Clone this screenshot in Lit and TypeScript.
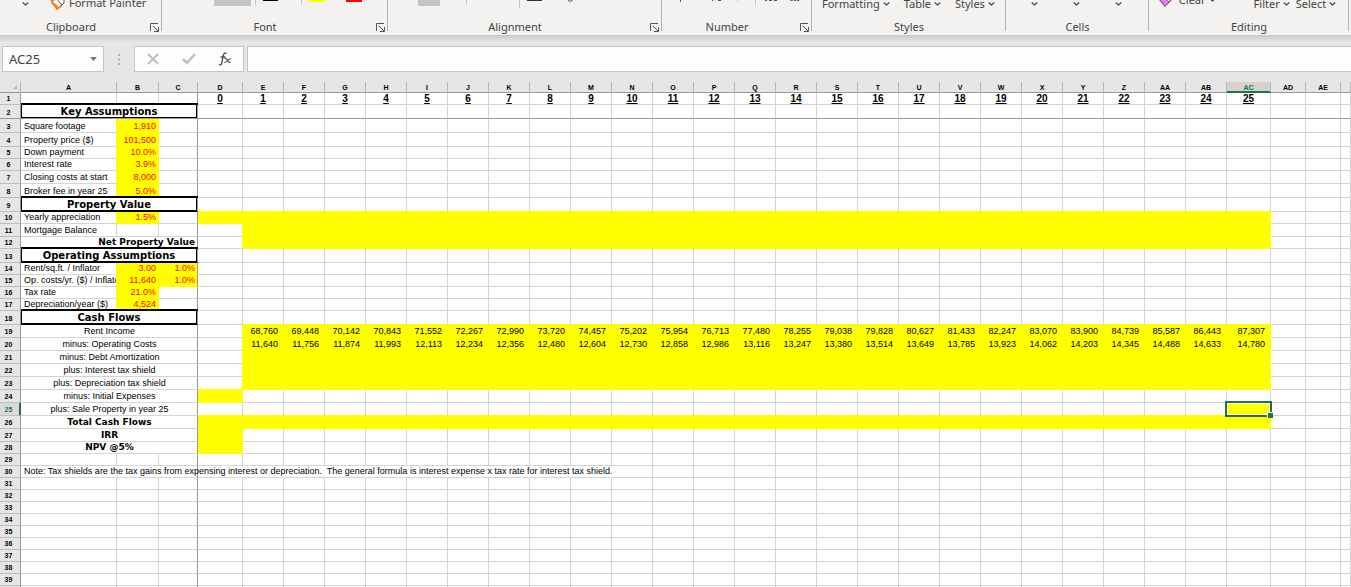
import { LitElement, html, css, svg, nothing } from "lit";
import { customElement } from "lit/decorators.js";
import { classMap } from "lit/directives/class-map.js";

const LETTERS = "ABCDEFGHIJKLMNOPQRSTUVWXYZ".split("");
const COLS = [...LETTERS, "AA", "AB", "AC", "AD", "AE", ""];
const AC = COLS.indexOf("AC");

type Row = { n: number; size: string; label?: string; kind?: string; b?: string; c?: string; fill?: [number, number]; values?: string[] };

const RENT = "68,760 69,448 70,142 70,843 71,552 72,267 72,990 73,720 74,457 75,202 75,954 76,713 77,480 78,255 79,038 79,828 80,627 81,433 82,247 83,070 83,900 84,739 85,587 86,443 87,307".split(" ");
const COSTS = "11,640 11,756 11,874 11,993 12,113 12,234 12,356 12,480 12,604 12,730 12,858 12,986 13,116 13,247 13,380 13,514 13,649 13,785 13,923 14,062 14,203 14,345 14,488 14,633 14,780".split(" ");

const ROWS: Row[] = [
  { n: 1, size: "s", kind: "years" },
  { n: 2, size: "l", kind: "section", label: "Key Assumptions" },
  { n: 3, size: "l", label: "Square footage", b: "1,910" },
  { n: 4, size: "l", label: "Property price ($)", b: "101,500" },
  { n: 5, size: "s", label: "Down payment", b: "10.0%" },
  { n: 6, size: "s", label: "Interest rate", b: "3.9%" },
  { n: 7, size: "m", label: "Closing costs at start", b: "8,000" },
  { n: 8, size: "l", label: "Broker fee in year 25", b: "5.0%" },
  { n: 9, size: "l", kind: "section", label: "Property Value" },
  { n: 10, size: "s", label: "Yearly appreciation", b: "1.5%", fill: [3, AC] },
  { n: 11, size: "m", label: "Mortgage Balance", fill: [4, AC] },
  { n: 12, size: "s", kind: "total right", label: "Net Property Value", fill: [4, AC] },
  { n: 13, size: "l", kind: "section", label: "Operating Assumptions" },
  { n: 14, size: "s", label: "Rent/sq.ft. / Inflator", b: "3.00", c: "1.0%" },
  { n: 15, size: "s", label: "Op. costs/yr. ($) / Inflator", b: "11,640", c: "1.0%" },
  { n: 16, size: "s", label: "Tax rate", b: "21.0%" },
  { n: 17, size: "s", label: "Depreciation/year ($)", b: "4,524" },
  { n: 18, size: "l", kind: "section", label: "Cash Flows" },
  { n: 19, size: "m", kind: "flow", label: "Rent Income", fill: [4, AC], values: RENT },
  { n: 20, size: "m", kind: "flow", label: "minus: Operating Costs", fill: [4, AC], values: COSTS },
  { n: 21, size: "m", kind: "flow", label: "minus: Debt Amortization", fill: [4, AC] },
  { n: 22, size: "m", kind: "flow", label: "plus: Interest tax shield", fill: [4, AC] },
  { n: 23, size: "m", kind: "flow", label: "plus: Depreciation tax shield", fill: [4, AC] },
  { n: 24, size: "m", kind: "flow", label: "minus: Initial Expenses", fill: [3, 3] },
  { n: 25, size: "m", kind: "flow", label: "plus: Sale Property in year 25", fill: [AC, AC] },
  { n: 26, size: "m", kind: "flow total", label: "Total Cash Flows", fill: [3, AC] },
  { n: 27, size: "m", kind: "flow total", label: "IRR", fill: [3, 3] },
  { n: 28, size: "s", kind: "flow total", label: "NPV @5%", fill: [3, 3] },
  { n: 29, size: "s" },
  { n: 30, size: "s", kind: "note", label: "Note: Tax shields are the tax gains from expensing interest or depreciation.\u00a0 The general formula is interest expense x tax rate for interest tax shield." },
  ...Array.from({ length: 10 }, (_, i) => ({ n: 31 + i, size: "s" })),
];

const filled = (row: Row | undefined, c: number): boolean => {
  if (!row) return false;
  if (c === 1) return !!row.b;
  if (c === 2) return !!row.c;
  return !!row.fill && c >= row.fill[0] && c <= row.fill[1];
};

const chevron = html`<svg class="chev" viewBox="0 0 7 4" width="7" height="4" aria-hidden="true"><path d="M.7 .5 3.5 3 6.3 .5" fill="none" stroke="#444" stroke-width="1.2"/></svg>`;

@customElement("excel-ribbon")
export class ExcelRibbon extends LitElement {
  static styles = css`
    :host { display: block; background: #f3f2f1; color: #444; font: 12px/16px "Noto Sans", "Open Sans", sans-serif; }
    .ribbon { display: flex; height: 35px; overflow: hidden; }
    .group { flex: none; box-sizing: border-box; display: grid; grid-template-rows: 19px 16px; position: relative; }
    .group::after { content: ""; position: absolute; right: 0; top: 0; width: 1px; height: 31px; background: #b3b0ad; }
    .clipboard { width: 162px; } .font { width: 226px; } .alignment { width: 274px; } .number { width: 150px; }
    .styles { width: 194px; } .cells { width: 143px; } .editing { width: 200px; }
    .tools { display: flex; min-width: 0; height: 19px; overflow: hidden; }
    .foot { display: flex; align-items: center; }
    .name { flex: 1; text-align: center; font-size: 11px; }
    button { font: inherit; color: inherit; background: none; border: 0; padding: 0; display: flex; align-items: center; gap: 3px; height: 16px; white-space: nowrap; }
    .text { margin-top: -4px; font-size: 11px; }
    .launch { width: 20px; justify-content: center; padding-left: 4px; }
    .clipboard .tools { padding-left: 22px; gap: 21px; }
    .painter { gap: 4px; margin-top: -5px; }
    .styles .tools { padding-left: 10px; gap: 14px; }
    .cells .tools { padding-left: 25px; gap: 35px; }
    .editing .tools { padding-left: 10px; gap: 6px; }
    .clear { margin-top: -8px; margin-right: 32px; }
  `;

  private foot(name: string, launcher: boolean) {
    return html`<div class="foot"><span class="name">${name}</span>${launcher
      ? html`<button class="launch" aria-label="${name} settings"><svg width="9" height="9" viewBox="0 0 9 9"><path d="M.5 8V.5H8M3 3l5 5M8.5 4v4.5H4" fill="none" stroke="#555"/></svg></button>`
      : nothing}</div>`;
  }

  render() {
    return html`<div class="ribbon">
      <section class="group clipboard"><div class="tools">
        <button class="text" aria-label="Paste options">${chevron}</button>
        <button class="text painter"><svg width="15" height="16" viewBox="0 0 15 16"><path d="m1.500 6 5.500 8 4-3 1-4-4-4z" fill="#fff" stroke="#e07a28" stroke-width="1.600"/><path d="m1 8 6 6 1-3-5-4z" fill="#e8842f"/><path d="m6 3 6 7 2-2V3z" fill="#fff" stroke="#555"/></svg>Format Painter</button>
      </div>${this.foot("Clipboard", true)}</section>
      <section class="group font"><div class="tools"><svg width="225" height="10" aria-hidden="true">
        <path d="M52 0h37v6H52z" fill="#c5c5c5"/><path d="M93.500 0v5M139.500 0v5" stroke="#c8c6c4"/>
        <path d="M101 0h15v1h-15z" fill="#000"/><path d="M147 0h16v2h-16z" fill="#ff0"/><path d="M184 0h16v2h-16z" fill="#f00"/></svg>
      </div>${this.foot("Font", true)}</section>
      <section class="group alignment"><div class="tools"><svg width="273" height="10" aria-hidden="true">
        <path d="M30 0h22v6H30z" fill="#c5c5c5"/><path d="M78.500 0v5M131.500 0v8" stroke="#c8c6c4"/>
        <path d="M139 0h15v1h-15z" fill="#333"/><path d="M180 .5q2 1.500 4.500 0" fill="none" stroke="#555"/></svg>
      </div>${this.foot("Alignment", true)}</section>
      <section class="group number"><div class="tools"><svg width="149" height="10" aria-hidden="true">
        <path d="M18.500 0v2M50.500 0v1M56 .5h3" stroke="#555"/><path d="M75.500 0v1M93.500 0v5" stroke="#c8c6c4"/>
        <path d="M103 .5h2M107 .5h3M112 .5h3M132 .5h2M135 .5h2" stroke="#555"/><path d="M128 .5h3" stroke="#2b88d8"/></svg>
      </div>${this.foot("Number", true)}</section>
      <section class="group styles"><div class="tools">
        <button class="text">Formatting ${chevron}</button><button class="text">Table ${chevron}</button><button class="text">Styles ${chevron}</button>
      </div>${this.foot("Styles", false)}</section>
      <section class="group cells"><div class="tools">
        ${["Insert", "Delete", "Format"].map((n) => html`<button class="text" aria-label=${n}>${chevron}</button>`)}
      </div>${this.foot("Cells", false)}</section>
      <section class="group editing"><div class="tools">
        <button class="text clear"><svg width="14" height="16" viewBox="0 0 14 16"><path d="M1 8 7 2l6 5-7 7z" fill="#fff" stroke="#a33fae" stroke-width="1.400"/><path d="m1 8 3-3 6 5-4 4z" fill="#d58cdb" stroke="#a33fae"/></svg>&nbsp;Clear ${chevron}</button>
        <button class="text">Filter ${chevron}</button><button class="text">Select ${chevron}</button>
      </div>${this.foot("Editing", false)}</section>
    </div>`;
  }
}

@customElement("formula-bar")
export class FormulaBar extends LitElement {
  static styles = css`
    :host { display: block; background: linear-gradient(#c8c8c8, #e6e6e6 7px); font: 13px/16px "Noto Sans", "Open Sans", sans-serif; color: #444; }
    .bar { display: flex; padding: 11px 0 10px 2px; height: 26px; }
    .box { box-sizing: border-box; display: flex; align-items: center; background: #fdfdfd; border: 1px solid #c6c6c6; }
    .name { width: 102px; }
    .actions { width: 110px; justify-content: space-between; padding: 0 11px; margin-right: 3px; }
    .entry { flex: 1; border-right: 0; }
    input { box-sizing: border-box; width: 100%; min-width: 0; border: 0; outline: 0; padding: 0 0 0 6px; background: none; font: inherit; color: inherit; }
    button { border: 0; background: none; padding: 0; display: flex; }
    .drop { padding-right: 6px; }
    .grip { width: 30px; display: grid; place-items: center; }
  `;
  render() {
    return html`<div class="bar">
      <div class="box name"><input aria-label="Name box" .value=${"AC25"} /><button class="drop" aria-label="Open name list"><svg width="7" height="4"><path d="M0 0h7L3.500 4z" fill="#777"/></svg></button></div>
      <div class="grip"><svg width="2" height="11" aria-hidden="true"><path d="M0 0h2v2H0zM0 4.500h2v2H0zM0 9h2v2H0z" fill="#b0b0b0"/></svg></div>
      <div class="box actions">
        <button aria-label="Cancel"><svg width="14" height="12"><path d="m2 1 10 10M12 1 2 11" stroke="#c0c0c0" stroke-width="2"/></svg></button>
        <button aria-label="Enter"><svg width="14" height="12"><path d="m1 6 4 4 8-9" fill="none" stroke="#c0c0c0" stroke-width="2.500"/></svg></button>
        <button aria-label="Insert function"><svg width="14" height="14" viewBox="0 0 14 14"><path d="M8.500 1.500C6.500 0 5.500 2 5 4.500L3.800 11c-.4 2-1.500 2.300-3 1.500M2.500 5h5" fill="none" stroke="#555" stroke-width="1.400"/><path d="M6.500 6.500c2-.8 2.300.5 3 2s1.200 2.500 3 1.700M12.800 6.500C10.500 6.500 9 10.500 6.300 10.500" fill="none" stroke="#555" stroke-width="1.200"/></svg></button>
      </div>
      <div class="box entry"><input aria-label="Formula" /></div>
    </div>`;
  }
}

@customElement("sheet-grid")
export class SheetGrid extends LitElement {
  static styles = css`
    :host { display: block; background: #e6e6e6; }
    table { table-layout: fixed; border-collapse: separate; border-spacing: 0; width: 100%; background: #fff; font: 9px/11px "Liberation Sans", Arial, sans-serif; color: #000; }
    .wh { width: 21px; } .wa { width: 96px; } .wb { width: 42px; } .wc { width: 39px; } .wd { width: 45px; }
    .wn { width: 41px; } .wl { width: 44px; } .we { width: 35px; }
    th, td { box-sizing: border-box; padding: 0 2px; border: 0 solid #d4d4d4; border-width: 0 1px 1px 0; white-space: nowrap; overflow: hidden; font-weight: normal; text-align: right; vertical-align: bottom; }
    .s > * { height: 12px; }
    .m > * { height: 13px; }
    .l > * { height: 14px; }
    .head > th { height: 11px; line-height: 9px; padding: 0; text-align: center; vertical-align: middle; font-size: 7px; font-weight: bold; background: #e6e6e6; border-right-color: #b4b4b4; border-bottom-color: #999; }
    .head > .picked { background: #d2d2d2; color: #217346; box-shadow: inset 0 -1px #217346; border-bottom-color: #217346; }
    .rowhead { padding: 0 3px 0 0; text-align: center; font-size: 7px; font-weight: bold; background: #e6e6e6; border-right-color: #999; border-bottom-color: #bdbdbd; }
    .rowhead.picked { background: #dadada; color: #217346; border-right-color: #217346; box-shadow: inset -1px 0 #217346; }
    .label { text-align: left; padding-left: 3px; }
    .flow { text-align: center; }
    .total { font: bold 9px/11px "DejaVu Sans", sans-serif; }
    .right { text-align: right; }
    .section { padding: 0; text-align: center; vertical-align: middle; font: bold 10px/13px "DejaVu Sans", sans-serif; overflow: visible; box-shadow: inset 1px 0 #000, inset -1px 0 #000, inset 0 -1px #000, 0 -1px #000, 0 -2px #000; border-bottom-color: #000; }
    .year { text-align: center; font-size: 10px; font-weight: bold; text-decoration: underline; }
    .input { color: #f00; }
    .fill { background: #ff0; }
    .fillr { border-right-color: #ff0; }
    .fillb { border-bottom-color: #ff0; }
    .blank { border-right-color: transparent; }
    .note { overflow: visible; }
    .num { padding-right: 5px; }
    .split { border-right-color: #999; }
    .freeze > * { border-bottom-color: #999; }
    .active { position: relative; overflow: visible; }
    .cursor { position: absolute; inset: -2px; border: 2px solid #217346; box-shadow: inset 0 0 0 1px #fff; }
    .cursor::after { content: ""; position: absolute; right: -3px; bottom: -3px; width: 5px; height: 5px; background: #217346; box-shadow: -1px -1px #fff; }
    .corner { display: block; margin: 0 3px 0 auto; }
  `;

  private cell(row: Row, c: number) {
    const below = ROWS[row.n];
    const self = filled(row, c);
    const years = row.kind === "years" && c >= 3 && c <= AC;
    const active = row.n === 25 && c === AC;
    const inner = years ? String(c - 3) : c === 1 ? row.b : c === 2 ? row.c : row.values?.[c - 4];
    return html`<td class=${classMap({
      fill: self, input: c < 3, num: c > 3 && !years, year: years, active,
      fillr: c !== 2 && (self || filled(row, c + 1)),
      fillb: row.n !== 2 && (self || filled(below, c)),
      split: c === 2,
      blank: row.kind === "note" && c < 13,
    })}>${inner ?? nothing}${active ? html`<div class="cursor"></div>` : nothing}</td>`;
  }

  private row(row: Row) {
    const merged = !!row.kind && row.kind !== "years";
    const start = merged ? 3 : 1;
    return html`<tr class=${row.size + (row.n === 2 ? " freeze" : "")}>
      <th scope="row" class="rowhead ${row.n === 25 ? "picked" : ""}">${row.n}</th>
      ${merged
        ? html`<td colspan="3" class="label split ${row.kind!}">${row.label}</td>`
        : html`<td class="label ${row.b ? "fillr" : ""}">${row.label ?? nothing}</td>`}
      ${COLS.slice(start).map((_, i) => this.cell(row, i + start))}
    </tr>`;
  }

  render() {
    const width = (c: string, i: number) => i < 4 ? "w" + c.toLowerCase() : c === "AC" ? "wl" : c === "AD" || c === "AE" ? "we" : c ? "wn" : "";
    return html`<table>
      <colgroup><col class="wh" />${COLS.map((c, i) => html`<col class=${width(c, i)} />`)}</colgroup>
      <thead><tr class="head"><th class="split"><svg class="corner" width="4" height="4" aria-hidden="true">${svg`<path d="M4 0v4H0z" fill="#b4b4b4"/>`}</svg></th>
        ${COLS.map((c) => html`<th scope="col" class=${c === "AC" ? "picked" : c === "C" ? "split" : ""}>${c}</th>`)}</tr></thead>
      <tbody>${ROWS.map((r) => this.row(r))}</tbody>
    </table>`;
  }
}

@customElement("app-root")
export class AppRoot extends LitElement {
  static styles = css`
    :host { display: block; height: 100vh; overflow: hidden; background: #fff; }
  `;
  render() {
    return html`<excel-ribbon></excel-ribbon><formula-bar></formula-bar><sheet-grid></sheet-grid>`;
  }
}
